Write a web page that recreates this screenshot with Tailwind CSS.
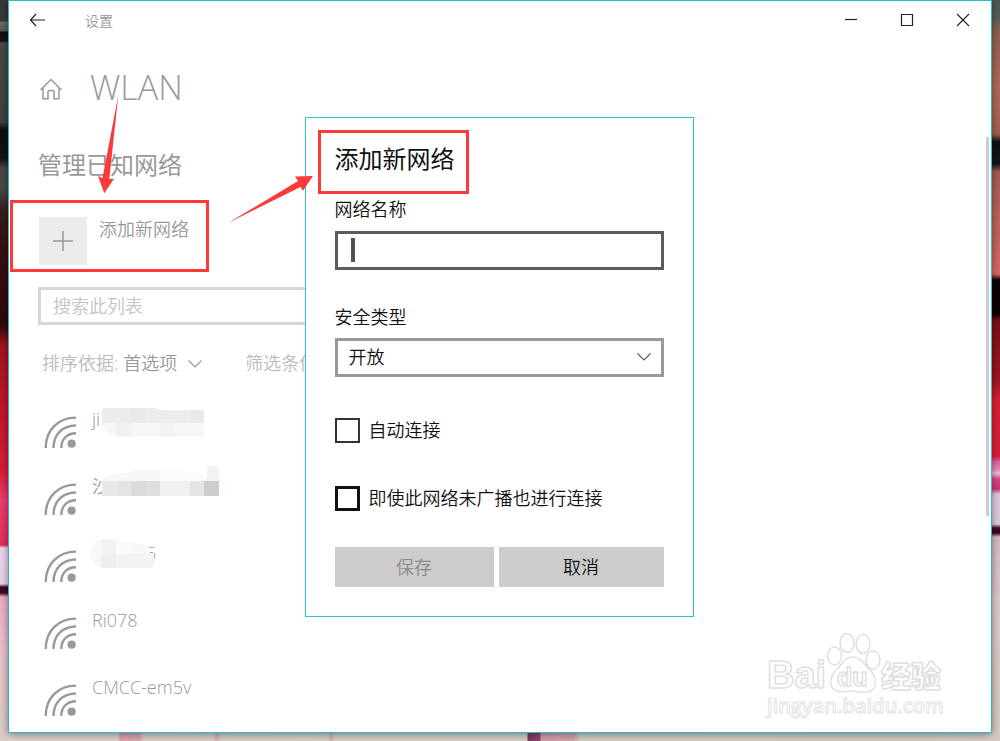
<!DOCTYPE html>
<html lang="zh-CN">
<head>
<meta charset="utf-8">
<meta name="viewport" content="width=device-width, initial-scale=1">
<title>设置</title>
<script src="https://cdn.jsdelivr.net/npm/@tailwindcss/browser@4"></script>
</head>
<body class="relative grid h-screen grid-cols-[8px_minmax(0,1fr)_8px] grid-rows-[minmax(0,1fr)_8px] overflow-hidden bg-[#d4ccc4] font-['Open_Sans','Noto_Sans_CJK_SC',sans-serif] font-[350] text-[#999]">

<!-- Desktop wallpaper, left edge -->
<div class="row-span-2 bg-[linear-gradient(#383838_0px,#3a3a3a_21px,#6c6c6a_22px,#585858_31px,#111_32px,#161616_41px,#474947_43px,#404240_122px,#0b0f0f_130px,#101414_158px,#484848_168px,#4a4a48_190px,#33201f_210px,#3a0f14_250px,#2d0a0e_325px,#a31420_345px,#c01628_400px,#d81d38_470px,#ef3e70_500px,#e62c58_545px,#efd5ea_548px,#ecd0e6_584px,#360824_587px,#3f0c2a_593px,#eeacc9_597px,#e9c3cc_650px,#dccdc6_741px)]"></div>

<!-- Settings window -->
<main class="relative z-10 overflow-hidden border border-[#24bccb] bg-white shadow-[0_1px_8px_rgba(0,0,0,0.45)]">
  <header class="flex h-[38px] items-center pl-[20px]">
    <button type="button" aria-label="返回" class="text-[#222]">
      <svg class="h-4 w-4" viewBox="0 0 16 16" fill="none" stroke="currentColor" stroke-width="1.2"><path d="M7 2 1.500 8 7 14M1.500 8H16"/></svg>
    </button>
    <span class="ml-10 text-[14px]">设置</span>
    <div class="ml-auto flex items-center gap-[42px] pr-[21px] text-[#222]">
      <button type="button" aria-label="最小化"><svg class="h-[14px] w-[14px]" viewBox="0 0 14 14" fill="none" stroke="currentColor" stroke-width="1.2"><path d="M1 6.5h12"/></svg></button>
      <button type="button" aria-label="最大化"><svg class="h-[14px] w-[14px]" viewBox="0 0 14 14" fill="none" stroke="currentColor" stroke-width="1.2"><path d="M1.500 1.500h11v11h-11z"/></svg></button>
      <button type="button" aria-label="关闭"><svg class="h-[14px] w-[14px]" viewBox="0 0 14 14" fill="none" stroke="currentColor" stroke-width="1.1"><path d="m1 1 12 12M13 1 1 13"/></svg></button>
    </div>
  </header>

  <section class="px-[29px]">
    <div class="mt-6 flex h-12 items-center gap-[27px]">
      <a href="#" aria-label="主页" class="pt-1 pl-px"><svg class="h-6 w-6" viewBox="0 0 24 24" fill="none" stroke="currentColor" stroke-width="1.500"><path d="m1.500 13 10.500-10.500 10.500 10.500M4 11v10.700h5v-6.700q0-1.500 1.500-1.500h3q1.500 0 1.500 1.500v6.700h5V11"/></svg></a>
      <h1 class="text-[34px] leading-[48px]">WLAN</h1>
    </div>
    <h2 class="mt-[38px] text-2xl leading-8 font-normal">管理已知网络</h2>

    <button type="button" class="mt-9 flex items-start gap-3 pl-px">
      <span class="grid h-12 w-12 place-items-center bg-[#ebebeb]"><svg class="h-5 w-5" viewBox="0 0 20 20" fill="none" stroke="currentColor" stroke-width="1.500"><path d="M10 0v20M0 10h20"/></svg></span>
      <span class="text-lg leading-6">添加新网络</span>
    </button>

    <input type="search" aria-label="搜索此列表" placeholder="搜索此列表" class="mt-[22px] block h-[38px] w-[400px] border-[3px] border-[#d6d6d6] px-3 text-lg placeholder:text-[#c4c4c4]">

    <div class="mt-[26px] flex items-center pl-1 text-lg leading-6 text-[#bbb]">
      <label for="sort">排序依据:</label>
      <div class="relative ml-[5px] text-[#999]">
        <select id="sort" class="block w-20 appearance-none"><option>首选项</option></select>
        <svg class="pointer-events-none absolute top-[9px] right-0 h-2 w-4" viewBox="0 0 16 8" fill="none" stroke="currentColor" stroke-width="1.200"><path d="m1.500.5 6.500 6.500L14.500.5"/></svg>
      </div>
      <label for="filter" class="ml-[42px]">筛选条件:</label>
      <select id="filter" class="ml-[6px] appearance-none text-[#999]"><option>全部</option></select>
    </div>

    <svg class="hidden"><symbol id="wifi" viewBox="0 0 32 32"><g fill="none" stroke="#999" stroke-width="2.400"><path d="M1.700 32C1.700 14 14 1.600 32 1.600M9.500 32C9.500 18.500 18.500 9.500 32 9.500M17.300 32C17.300 23 23 17.300 32 17.300"/></g><circle cx="27.600" cy="27.700" r="4.100" fill="#999"/></symbol></svg>

    <ul class="mt-[23px] pl-[6px] text-lg leading-6">
      <li class="relative flex h-[67px] items-start gap-4 pt-[9px]">
        <svg class="mt-[9px] h-8 w-8"><use href="#wifi"/></svg><span>ji</span>
        <svg class="absolute top-[10px] left-[56px] h-[30px] w-[106px]" viewBox="0 0 106 30" aria-hidden="true">
          <clipPath id="m1"><path d="M3 0h51q8 3 27 2.500L104 2v27H27Q10 29 2 18V4z"/></clipPath>
          <g clip-path="url(#m1)"><path fill="#ececec" d="M0 0h106v15H0z"/><path fill="#f6f6f6" d="M0 15h106v15H0z"/><path fill="#e9e9e9" d="M31 0h15v15H31zM90 0h16v15H90z"/><path fill="#f0f0f0" d="M16 15h15v15H16z"/><path fill="#f3f3f3" d="M60 15h15v15H60z"/></g>
        </svg>
      </li>
      <li class="relative flex h-[67px] items-start gap-4 pt-[9px]">
        <svg class="mt-[9px] h-8 w-8"><use href="#wifi"/></svg><span>沙</span>
        <svg class="absolute top-0 left-[58px] h-8 w-[134px]" viewBox="0 0 134 32" aria-hidden="true">
          <clipPath id="m2"><path d="M0 13Q8 9 24 8 36 4 57 5q27-1 48 7V1h12v15h14v15H0z"/></clipPath>
          <g clip-path="url(#m2)"><path fill="#f7f7f7" d="M0 0h134v16H0z"/><path fill="#fbfbfb" d="M58 0h45v16H58z"/><path fill="#f2f2f2" d="M105 0h12v16h-12z"/><path fill="#e8e8e8" d="M0 16h15v16H0z"/><path fill="#e4e4e4" d="M15 16h14v16H15z"/><path fill="#dbdbdb" d="M29 16h15v16H29z"/><path fill="#dedede" d="M44 16h14v16H44z"/><path fill="#f0f0f0" d="M58 16h30v16H58z"/><path fill="#e4e4e4" d="M88 16h14v16H88z"/><path fill="#cdcdcd" d="M102 16h15v16h-15z"/><path fill="#fdfdfd" d="M117 16h15v16h-15z"/></g>
        </svg>
      </li>
      <li class="relative flex h-[67px] items-start gap-4 pt-[9px]">
        <svg class="mt-[9px] h-8 w-8"><use href="#wifi"/></svg><span class="pl-[54px]">5</span>
        <svg class="absolute top-[7px] left-[46px] h-[30px] w-[66px]" viewBox="0 0 66 30" aria-hidden="true">
          <clipPath id="m3"><path d="M11 0h15q4 3 14 3 15 2 20 6v5h4v10l-2 5H14Q0 27 0 14 2 2 11 0z"/></clipPath>
          <g clip-path="url(#m3)"><path fill="#f8f8f8" d="M0 0h66v30H0z"/><path fill="#f2f2f2" d="M11 0h15v15H11z"/><path fill="#eee" d="M11 15h15v15H11z"/><path fill="#fafafa" d="M26 0h15v15H26z"/><path fill="#f3f3f3" d="M26 15h40v15H26z"/></g>
        </svg>
      </li>
      <li class="flex h-[67px] items-start gap-4 pt-[9px]"><svg class="mt-[9px] h-8 w-8"><use href="#wifi"/></svg><span>Ri078</span></li>
      <li class="flex h-[67px] items-start gap-4 pt-[9px]"><svg class="mt-[9px] h-8 w-8"><use href="#wifi"/></svg><span>CMCC-em5v</span></li>
    </ul>
  </section>

  <div class="absolute top-[136px] right-[2px] h-[379px] w-[3px] bg-[#ccc]" aria-hidden="true"></div>

  <!-- Watermark -->
  <svg class="absolute right-[43px] bottom-2 h-[92px] w-[184px] overflow-visible" viewBox="0 0 184 92" role="img" aria-label="Baidu 经验" fill="#fff" stroke="#e0e0e0" stroke-width="1.500" stroke-linejoin="round">
    <g font-family="Liberation Sans, Noto Sans CJK SC, sans-serif" font-weight="700">
      <text x="3" y="56" font-size="38">Bai</text>
      <ellipse cx="70.500" cy="24" rx="7" ry="9"/><ellipse cx="83" cy="11" rx="7" ry="9.500"/><ellipse cx="99" cy="12" rx="7" ry="9.500"/><ellipse cx="109" cy="28" rx="7" ry="9"/>
      <path d="M89 25c8 0 11 7 16 12 8 7 9 21-1 23-8 1-10-1-16-1s-9 2-15 0c-10-3-7-16 1-23 5-5 7-11 15-11z"/>
      <text x="73" y="54" font-size="25">du</text>
      <text x="117" y="55" font-size="30" font-weight="900">经验</text>
    </g>
    <text x="3" y="81" font-size="20" font-family="Open Sans, sans-serif" font-weight="600" stroke-width="1.300" stroke="#e8e8e8">jingyan.baidu.com</text>
  </svg>

  <!-- Add-network dialog -->
  <div class="absolute inset-0 flex items-center justify-center pr-[2px]">
    <form role="dialog" aria-labelledby="dlg-title" class="flex w-[389px] flex-col border border-[#33c1cd] bg-white px-[29px] pt-[25px] pb-[29px] text-lg leading-6 text-[#111]">
      <h2 id="dlg-title" class="text-2xl leading-8 font-normal">添加新网络</h2>
      <label for="ssid" class="mt-[22px]">网络名称</label>
      <div class="relative mt-[10px]">
        <input id="ssid" type="text" class="block h-[39px] w-full border-[3px] border-[#5c5c5c] px-3">
        <span class="absolute top-[7px] left-4 h-6 w-1 bg-[#505050]" aria-hidden="true"></span>
      </div>
      <label for="security" class="mt-[35px]">安全类型</label>
      <div class="relative mt-[9px]">
        <select id="security" class="block h-[39px] w-full appearance-none border-[3px] border-[#999] px-[11px]"><option>开放</option></select>
        <svg class="pointer-events-none absolute top-[15px] right-[12px] h-2 w-4" viewBox="0 0 16 8" fill="none" stroke="#555" stroke-width="1.100"><path d="m1.500.5 6.500 6.500L14.500.5"/></svg>
      </div>
      <label class="mt-[41px] flex h-[25px] items-center gap-[9px]"><input type="checkbox" class="h-[25px] w-[25px] appearance-none border-2 border-[#333]">自动连接</label>
      <label class="mt-[43px] flex h-[25px] items-center gap-[9px]"><input type="checkbox" class="h-[25px] w-[25px] appearance-none border-[3px] border-[#111]">即使此网络未广播也进行连接</label>
      <div class="mt-9 grid grid-cols-[159fr_165fr] gap-[5px]">
        <button type="button" disabled class="h-10 bg-[#ccc] text-[#8a8a8a]">保存</button>
        <button type="button" class="h-10 bg-[#ccc]">取消</button>
      </div>
    </form>
  </div>
</main>

<!-- Desktop wallpaper, right edge -->
<div class="row-span-2 bg-[linear-gradient(#4c5552_0px,#59605b_18px,#8d5f50_30px,#b06a5c_90px,#a5604f_134px,#0c1012_142px,#14181a_164px,#a65c55_172px,#c96560_245px,#dd6763_274px,#0d0306_280px,#100206_314px,#7c0d18_320px,#a01422_380px,#e01d35_400px,#d91d3b_456px,#e164a0_462px,#e98bbb_470px,#ecc4de_473px,#e2428b_479px,#cc3878_489px,#e3c6dc_494px,#dfc9dc_524px,#40092a_528px,#3a0726_533px,#d9b9c4_537px,#dcc9cb_600px,#d6cbc4_741px)]"></div>

<!-- Desktop wallpaper, bottom edge -->
<div class="bg-[linear-gradient(90deg,#dccfc9_0px,#dccfc9_110px,#dc9fac_112px,#dba6b0_132px,#dacdc5_136px,#d8cec5_205px,#d5aeb2_209px,#d6cdc4_213px,#d5cec4_320px,#d5aeb0_323px,#d4cec4_327px,#d3cdc4_519px,#7a3c5a_520px,#90446a_532px,#cf9ba6_533px,#d0a3ab_566px,#d2ccc2_572px,#d0cac0_900px,#d6cbc4_984px)]"></div>

<!-- Tutorial annotations -->
<svg class="pointer-events-none absolute top-0 left-0 z-20 h-[300px] w-[480px]" viewBox="0 0 480 300" fill="none" stroke="#fc3a3a" stroke-width="3" aria-hidden="true">
  <path d="M11.500 201.500h196v69h-196zM319.500 131.500h148v61h-148z"/>
  <path fill="#fc3a3a" stroke="none" d="m118.300 95-15.800 83-4.500-2L104.300 193.300l9.700-14.600-4.700.3zM228 223l70-42-3-4.500 18-.5-10 14.700-2.500-3.700z"/>
</svg>
</body>
</html>
